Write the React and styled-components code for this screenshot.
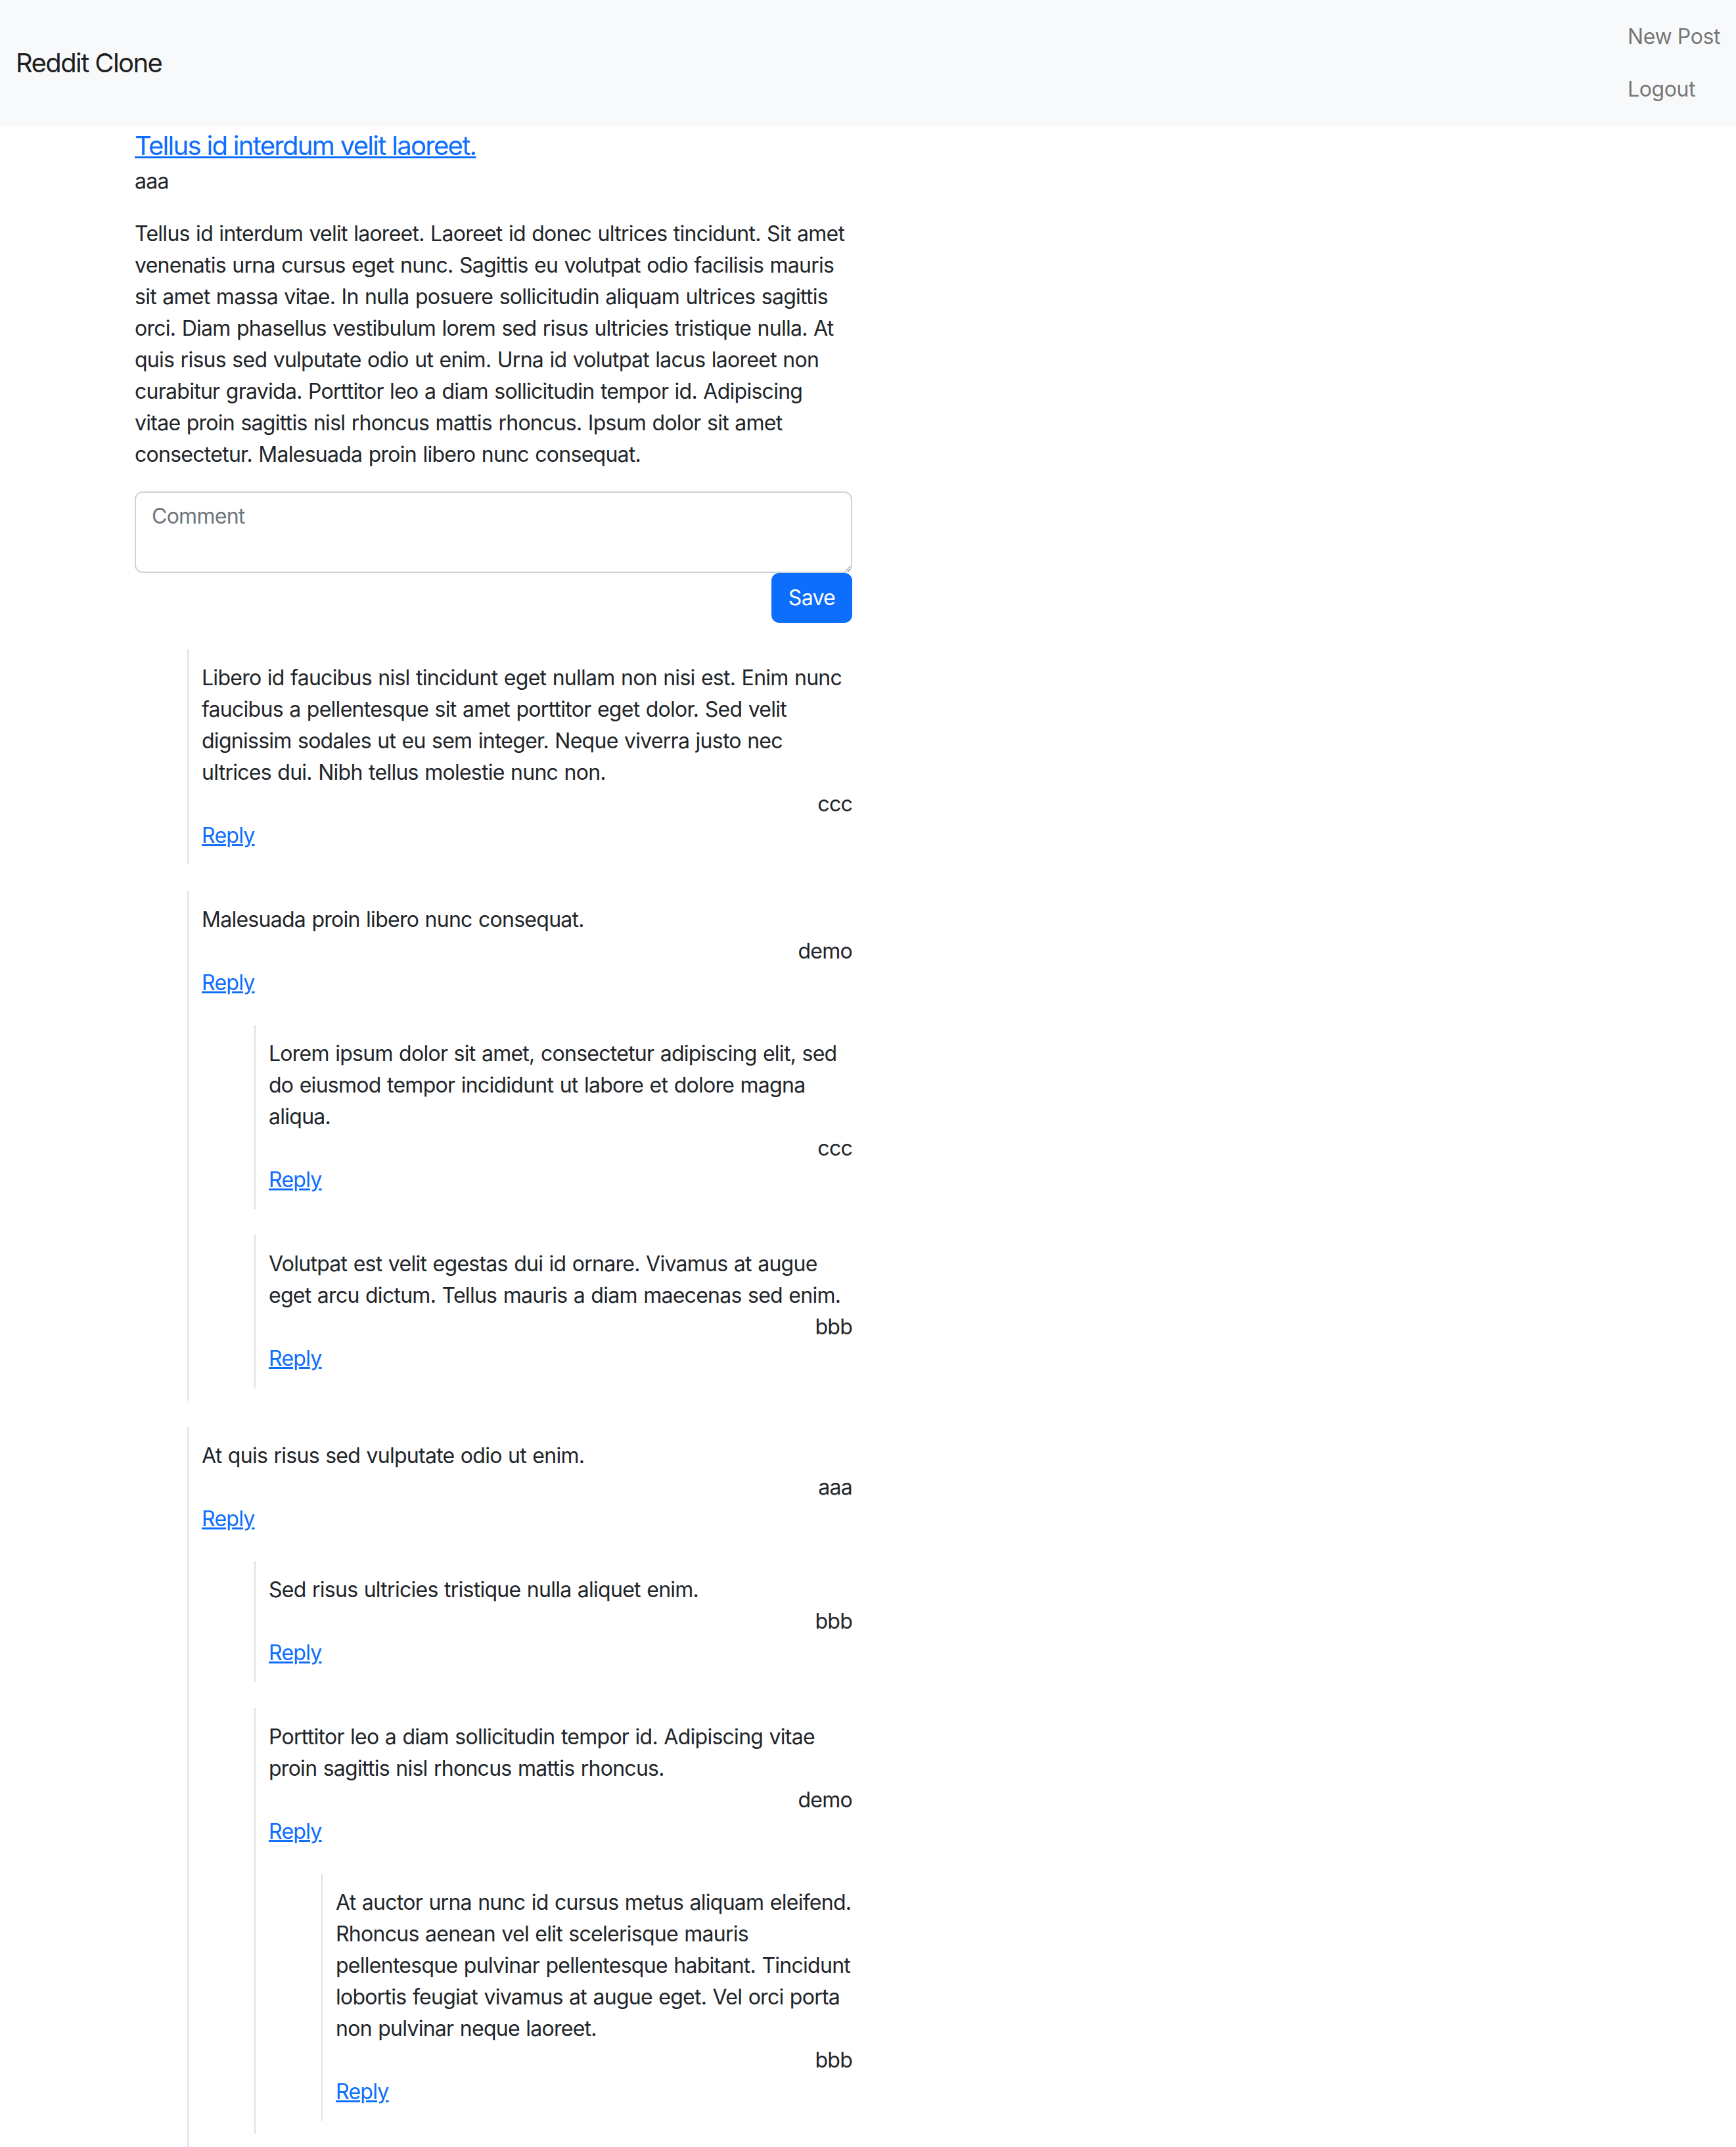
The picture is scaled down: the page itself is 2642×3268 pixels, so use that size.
import React from "react";
import styled, { createGlobalStyle } from "styled-components";

const GlobalStyle = createGlobalStyle`
  *, *::before, *::after { box-sizing: border-box; }
  html, body { margin: 0; padding: 0; background: #ffffff; }
  body {
    font-family: Inter, "Noto Sans", "Liberation Sans", sans-serif;
    font-size: 32px;
    line-height: 48px;
    letter-spacing: -0.73px;
    word-spacing: 1.1px;
    color: #212529;
    -webkit-font-smoothing: antialiased;
  }
`;

const Navbar = styled.nav`
  display: flex;
  align-items: center;
  justify-content: space-between;
  padding: 16px 24px;
  background: #f8f9fa;
`;

const Brand = styled.a`
  font-size: 40px;
  line-height: 60px;
  letter-spacing: -1.6px;
  word-spacing: 0;
  padding: 10px 0;
  color: rgba(0, 0, 0, 0.9);
  text-decoration: none;
`;

const NavList = styled.ul`
  display: flex;
  flex-direction: column;
  list-style: none;
  margin: 0;
  padding: 0;
`;

const NavLink = styled.a`
  display: block;
  padding: 16px 0;
  letter-spacing: -0.4px;
  word-spacing: 0;
  color: rgba(0, 0, 0, 0.55);
  text-decoration: none;
`;

const Container = styled.main`
  width: 2280px;
  margin: 0 auto;
  padding: 0 24px;
`;

const Column = styled.div`
  width: 1092px;
`;

const TitleLink = styled.a`
  display: inline-block;
  font-size: 40px;
  line-height: 60px;
  letter-spacing: -1.7px;
  word-spacing: 0;
  color: #0d6efd;
  text-decoration: underline;
  text-decoration-thickness: 3px;
`;

const Meta = styled.div`
  margin-bottom: 32px;
`;

const Body = styled.p`
  margin: 0 0 32px;
`;

const CommentInput = styled.textarea`
  display: block;
  width: 100%;
  height: 124px;
  padding: 12px 24px;
  font: inherit;
  letter-spacing: inherit;
  color: #212529;
  border: 2px solid #ced4da;
  border-radius: 12px;
  resize: vertical;
  &::placeholder { color: #6c757d; }
`;

const Actions = styled.div`
  display: flex;
  justify-content: flex-end;
`;

const SaveButton = styled.button`
  font: inherit;
  letter-spacing: inherit;
  padding: 12px 24px;
  color: #ffffff;
  background: #0d6efd;
  border: 2px solid #0d6efd;
  border-radius: 12px;
`;

const CommentList = styled.div`
  padding-left: 80px;
`;

const CommentBox = styled.div`
  margin-top: 40px;
  border-left: 2px solid #dee2e6;
  padding: 20px 0 20px 20px;
`;

const CommentText = styled.p`
  margin: 0;
`;

const Author = styled.div`
  text-align: right;
`;

const ReplyLink = styled.a`
  color: #0d6efd;
  text-decoration: underline;
`;

const comments = [
  {
    text: "Libero id faucibus nisl tincidunt eget nullam non nisi est. Enim nunc faucibus a pellentesque sit amet porttitor eget dolor. Sed velit dignissim sodales ut eu sem integer. Neque viverra justo nec ultrices dui. Nibh tellus molestie nunc non.",
    author: "ccc",
  },
  {
    text: "Malesuada proin libero nunc consequat.",
    author: "demo",
    children: [
      {
        text: "Lorem ipsum dolor sit amet, consectetur adipiscing elit, sed do eiusmod tempor incididunt ut labore et dolore magna aliqua.",
        author: "ccc",
      },
      {
        text: "Volutpat est velit egestas dui id ornare. Vivamus at augue eget arcu dictum. Tellus mauris a diam maecenas sed enim.",
        author: "bbb",
      },
    ],
  },
  {
    text: "At quis risus sed vulputate odio ut enim.",
    author: "aaa",
    children: [
      { text: "Sed risus ultricies tristique nulla aliquet enim.", author: "bbb" },
      {
        text: "Porttitor leo a diam sollicitudin tempor id. Adipiscing vitae proin sagittis nisl rhoncus mattis rhoncus.",
        author: "demo",
        children: [
          {
            text: "At auctor urna nunc id cursus metus aliquam eleifend. Rhoncus aenean vel elit scelerisque mauris pellentesque pulvinar pellentesque habitant. Tincidunt lobortis feugiat vivamus at augue eget. Vel orci porta non pulvinar neque laoreet.",
            author: "bbb",
          },
        ],
      },
    ],
  },
];

function Comment({ comment }) {
  return (
    <CommentBox>
      <CommentText>{comment.text}</CommentText>
      <Author>{comment.author}</Author>
      <ReplyLink href="#">Reply</ReplyLink>
      {comment.children && <Comments items={comment.children} />}
    </CommentBox>
  );
}

function Comments({ items }) {
  return (
    <CommentList>
      {items.map((c, i) => (
        <Comment key={i} comment={c} />
      ))}
    </CommentList>
  );
}

export default function App() {
  return (
    <>
      <GlobalStyle />
      <Navbar>
        <Brand href="#">Reddit Clone</Brand>
        <NavList>
          <li><NavLink href="#">New Post</NavLink></li>
          <li><NavLink href="#">Logout</NavLink></li>
        </NavList>
      </Navbar>
      <Container>
        <Column>
          <TitleLink href="#">Tellus id interdum velit laoreet.</TitleLink>
          <Meta>aaa</Meta>
          <Body>
            Tellus id interdum velit laoreet. Laoreet id donec ultrices tincidunt. Sit amet venenatis urna cursus eget nunc. Sagittis eu volutpat odio facilisis mauris sit amet massa vitae. In nulla posuere sollicitudin aliquam ultrices sagittis orci. Diam phasellus vestibulum lorem sed risus ultricies tristique nulla. At quis risus sed vulputate odio ut enim. Urna id volutpat lacus laoreet non curabitur gravida. Porttitor leo a diam sollicitudin tempor id. Adipiscing vitae proin sagittis nisl rhoncus mattis rhoncus. Ipsum dolor sit amet consectetur. Malesuada proin libero nunc consequat.
          </Body>
          <CommentInput placeholder="Comment" />
          <Actions>
            <SaveButton type="button">Save</SaveButton>
          </Actions>
          <Comments items={comments} />
        </Column>
      </Container>
    </>
  );
}
